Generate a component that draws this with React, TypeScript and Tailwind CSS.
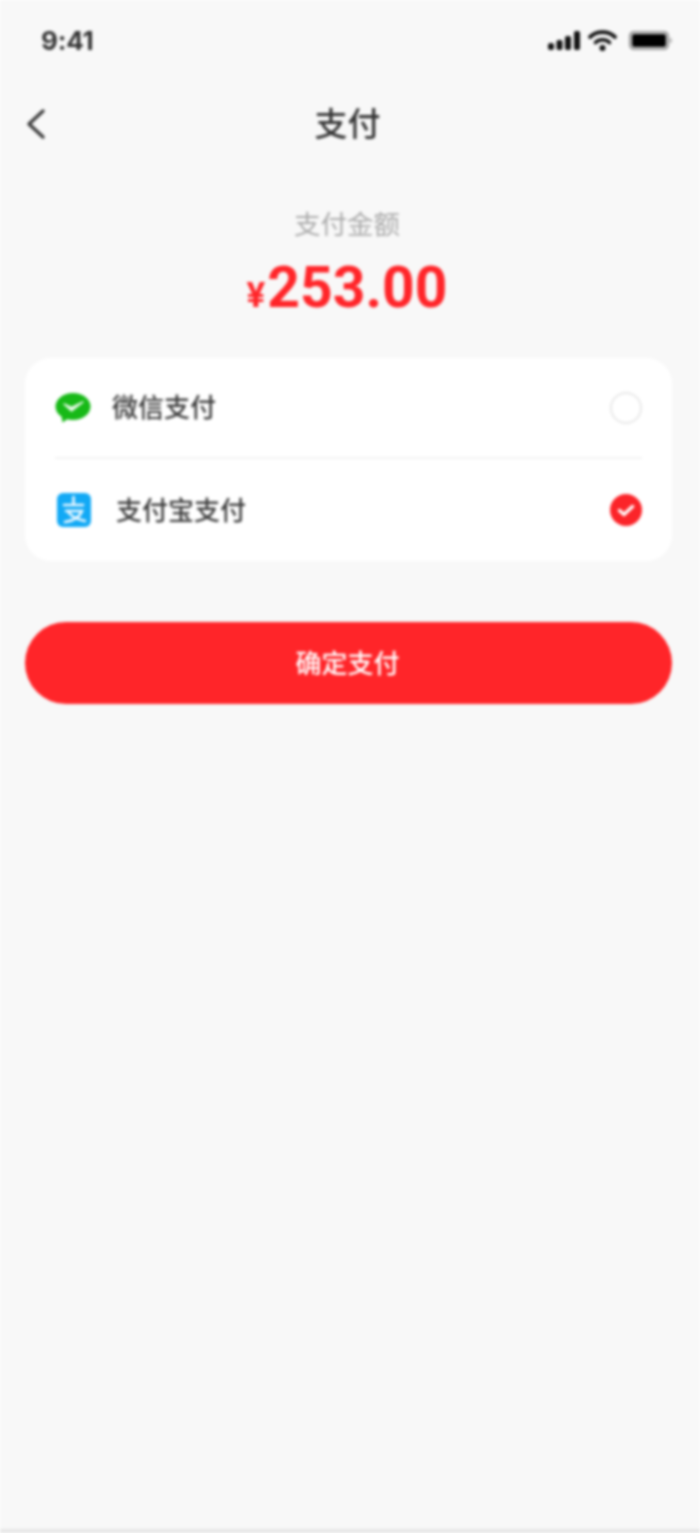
import { useState } from 'react';

const cjk = { fontFamily: '"Inter", "Noto Sans CJK SC", sans-serif' };

// Status bar glyphs
function StatusIcons() {
  return (
    <svg width="126" height="24" viewBox="0 0 126 24" fill="none">
      <rect x="1" y="14" width="6" height="7" rx="2.500" fill="#111" />
      <rect x="9.500" y="11" width="6" height="10" rx="2" fill="#111" />
      <rect x="18" y="7" width="6" height="14" rx="2" fill="#111" />
      <rect x="27" y="2" width="6" height="19" rx="2" fill="#111" />
      <path d="M43 8c7-6.500 18-6.500 25 0" stroke="#111" strokeWidth="3.800" strokeLinecap="round" />
      <path d="M48.500 13.500c4-3.600 10-3.600 14 0" stroke="#111" strokeWidth="3.600" strokeLinecap="round" />
      <circle cx="55.500" cy="19" r="3" fill="#111" />
      <rect x="83" y="3" width="38" height="17" rx="4" stroke="#777" strokeWidth="1.600" />
      <rect x="85" y="5" width="34" height="13" rx="2" fill="#000" />
      <rect x="122.500" y="9" width="2.500" height="5" rx="1" fill="#bbb" />
    </svg>
  );
}

function WechatIcon() {
  return (
    <svg width="36" height="30" viewBox="0 0 36 30">
      <ellipse cx="18" cy="13.500" rx="17.500" ry="13.500" fill="#17b917" />
      <path d="M6 20l1.500 9.500 8-5.500z" fill="#17b917" />
      <path d="M9 11l7.500 7L28 9l-11.500 5.500z" fill="#eafaea" stroke="#eafaea" strokeWidth="1.400" strokeLinejoin="round" />
    </svg>
  );
}

function AlipayIcon() {
  return (
    <svg width="34" height="34" viewBox="0 0 34 34">
      <rect width="34" height="34" rx="6" fill="#12a9f5" />
      <path d="M16.500 4v8M7 12h19M9 18h16c-2.500 6.500-9 10-17 11M12 20c3.500 4 9 6.500 16 8" stroke="#f0f9ff" strokeWidth="2.600" fill="none" strokeLinecap="round" />
    </svg>
  );
}

function Checked() {
  return (
    <svg width="32" height="32" viewBox="0 0 32 32">
      <circle cx="16" cy="16" r="16" fill="#fb2429" />
      <path d="M9.500 16.500l4.500 4 8.500-8" stroke="#fff" strokeWidth="3.400" fill="none" strokeLinecap="round" strokeLinejoin="round" />
    </svg>
  );
}

export default function App() {
  const [method, setMethod] = useState<'wechat' | 'alipay'>('alipay');

  return (
    <div className="flex h-[1533px] w-[700px] flex-col overflow-hidden bg-[#f8f8f8] blur-[1.4px]" style={cjk}>
      {/* Status bar */}
      <div className="flex h-[80px] items-center justify-between pl-[41px] pr-[27px] pt-[2px]">
        <span className="text-[26px] font-bold leading-none tracking-[-0.2px] text-[#333]">9:41</span>
        <StatusIcons />
      </div>

      {/* Nav */}
      <div className="relative flex h-[88px] items-center justify-center pr-[5px]">
        <button className="absolute left-[25px] top-[28px]">
          <svg width="22" height="32" viewBox="0 0 22 32" fill="none">
            <path d="M18 3L4 16l14 13" stroke="#3a3a3a" strokeWidth="3.400" strokeLinecap="round" strokeLinejoin="round" />
          </svg>
        </button>
        <span className="text-[33px] font-medium leading-none text-[#333]">支付</span>
      </div>

      {/* Amount */}
      <div className="mt-[43px] flex flex-col items-center pr-[6px]">
        <span className="text-[26.500px] leading-[27px] text-[#aaa]">支付金额</span>
        <div className="mt-[21px] flex items-baseline font-bold leading-none text-[#ff2529]" style={{ fontFamily: 'Roboto, sans-serif' }}>
          <span className="mr-[2px] text-[35px]">¥</span>
          <span className="text-[57px]">253.00</span>
        </div>
      </div>

      {/* Payment methods */}
      <div className="mx-[25px] mt-[42px] h-[203px] w-[647px] rounded-[26px] bg-white px-[30px]">
        <button onClick={() => setMethod('wechat')} className="flex h-[101px] w-full items-center justify-between border-b-2 border-[#f3f3f3]">
          <span className="flex items-center">
            <WechatIcon />
            <span className="ml-[21px] text-[26px] font-medium text-[#3c3c3c]">微信支付</span>
          </span>
          {method === 'wechat' ? <Checked /> : <span className="h-[32px] w-[32px] rounded-full border-2 border-[#e8e8e8]" />}
        </button>
        <button onClick={() => setMethod('alipay')} className="flex h-[102px] w-full items-center justify-between pl-[2px]">
          <span className="flex items-center">
            <AlipayIcon />
            <span className="ml-[25px] text-[26px] font-medium text-[#3c3c3c]">支付宝支付</span>
          </span>
          {method === 'alipay' ? <Checked /> : <span className="h-[32px] w-[32px] rounded-full border-2 border-[#e8e8e8]" />}
        </button>
      </div>

      <button className="mx-[25px] mt-[61px] flex h-[82px] w-[647px] items-center justify-center rounded-full bg-[#ff2529] pr-[2px] text-[26px] font-medium text-white">
        确定支付
      </button>

      {/* Bottom edge */}
      <div className="mt-auto h-[4px] bg-[#e6e6e6]" />
    </div>
  );
}
